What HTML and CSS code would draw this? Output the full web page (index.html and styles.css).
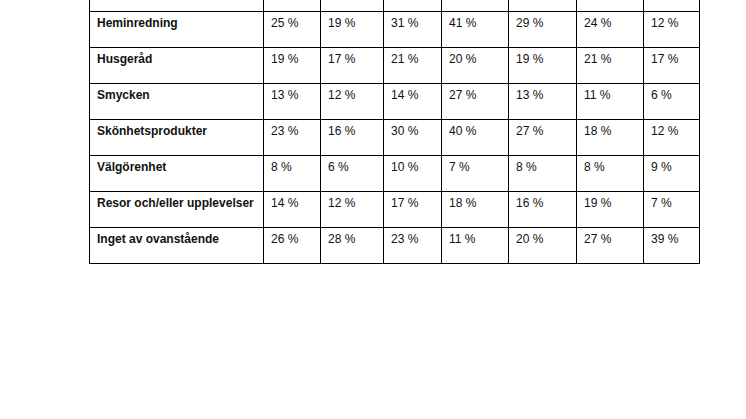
FILE: index.html
```html
<!DOCTYPE html>
<html lang="sv">
<head>
<meta charset="utf-8">
<title>Tabell</title>
<link rel="stylesheet" href="styles.css">
</head>
<body>
<div class="page">
<table class="stats">
<colgroup>
<col class="c-label"><col class="c1"><col class="c2"><col class="c3"><col class="c4"><col class="c5"><col class="c6"><col class="c7">
</colgroup>
<tbody>
<tr class="cut"><td></td><td></td><td></td><td></td><td></td><td></td><td></td><td></td></tr>
<tr><th>Heminredning</th><td>25 %</td><td>19 %</td><td>31 %</td><td>41 %</td><td>29 %</td><td>24 %</td><td>12 %</td></tr>
<tr><th>Husgeråd</th><td>19 %</td><td>17 %</td><td>21 %</td><td>20 %</td><td>19 %</td><td>21 %</td><td>17 %</td></tr>
<tr><th>Smycken</th><td>13 %</td><td>12 %</td><td>14 %</td><td>27 %</td><td>13 %</td><td>11 %</td><td>6 %</td></tr>
<tr><th>Skönhetsprodukter</th><td>23 %</td><td>16 %</td><td>30 %</td><td>40 %</td><td>27 %</td><td>18 %</td><td>12 %</td></tr>
<tr><th>Välgörenhet</th><td>8 %</td><td>6 %</td><td>10 %</td><td>7 %</td><td>8 %</td><td>8 %</td><td>9 %</td></tr>
<tr><th>Resor och/eller upplevelser</th><td>14 %</td><td>12 %</td><td>17 %</td><td>18 %</td><td>16 %</td><td>19 %</td><td>7 %</td></tr>
<tr><th>Inget av ovanstående</th><td>26 %</td><td>28 %</td><td>23 %</td><td>11 %</td><td>20 %</td><td>27 %</td><td>39 %</td></tr>
</tbody>
</table>
</div>
</body>
</html>
```
FILE: styles.css
```css
html, body {
  margin: 0;
  padding: 0;
  background: #ffffff;
}
.page {
  padding-left: 89px;
}
.stats {
  border-collapse: collapse;
  table-layout: fixed;
  width: 611px;
  font-family: "Liberation Sans", Arial, sans-serif;
  font-size: 12px;
  color: #111;
}
.c-label { width: 174px; }
.c1 { width: 57px; }
.c2 { width: 63px; }
.c3 { width: 58px; }
.c4 { width: 67px; }
.c5 { width: 68px; }
.c6 { width: 67px; }
.c7 { width: 56px; }
.stats th, .stats td {
  border: 1px solid #000;
  height: 36px;
  padding: 4px 6px 0 7px;
  vertical-align: top;
  text-align: left;
  line-height: 14px;
  white-space: nowrap;
  box-sizing: border-box;
}
.stats th {
  font-weight: bold;
}
.stats td {
  font-weight: normal;
}
.stats tr.cut td {
  height: 11px;
  padding: 0;
  border-top: none;
}
```
